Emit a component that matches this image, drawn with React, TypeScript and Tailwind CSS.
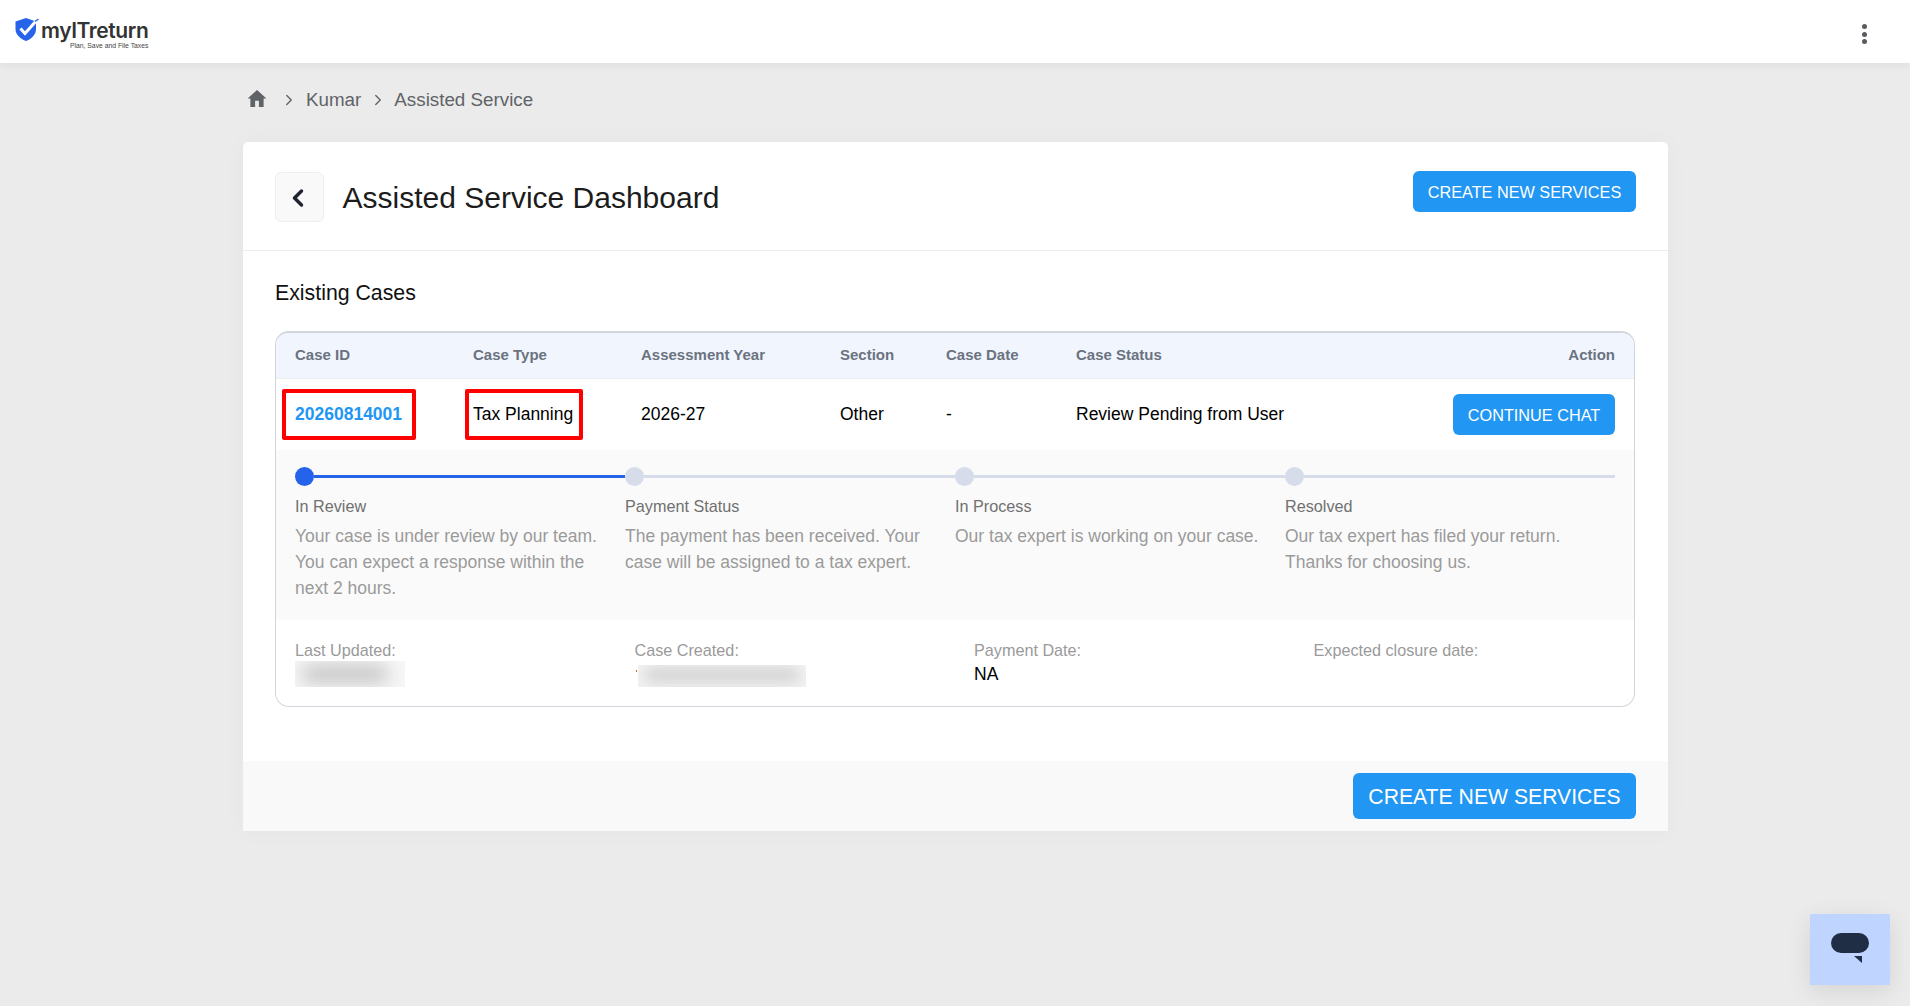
import { ChevronLeft, ChevronRight } from 'lucide-react';

const steps = [
  {
    title: 'In Review',
    text: 'Your case is under review by our team. You can expect a response within the next 2 hours.',
  },
  {
    title: 'Payment Status',
    text: 'The payment has been received. Your case will be assigned to a tax expert.',
  },
  {
    title: 'In Process',
    text: 'Our tax expert is working on your case.',
  },
  {
    title: 'Resolved',
    text: 'Our tax expert has filed your return. Thanks for choosing us.',
  },
];

const Logo = () => (
  <div className="flex items-start pt-[4px]">
    <svg width="24" height="23" viewBox="0 0 24 23">
      <path d="M11 0 L21 3.5 V11 C21 17 16 21 11 23 C6 21 0.5 17 0.5 11 V3.5 Z" fill="#2563eb" />
      <path d="M5.5 10.5 L10 15.5 L21.5 2.5" fill="none" stroke="#fff" strokeWidth="3" />
      <path d="M20 3.5 L23.5 1" fill="none" stroke="#2563eb" strokeWidth="1.5" />
    </svg>
    <div className="mt-[2px] ml-[2px] flex flex-col items-end">
      <span className="font-['Inter',sans-serif] text-[21px] leading-[22px] font-semibold tracking-[-0.4px] text-[#333]">
        myITreturn
      </span>
      <span className="font-['Liberation_Sans',sans-serif] text-[6.8px] leading-[8px] text-[#444]">
        Plan, Save and File Taxes
      </span>
    </div>
  </div>
);

const App = () => {
  return (
    <div className="relative min-h-[1006px] bg-[#ebebeb] font-['Liberation_Sans',sans-serif]">
      {/* Top bar */}
      <header className="flex h-[63px] items-center justify-between bg-white pr-[43px] pl-[15px] shadow-[0_2px_8px_rgba(0,0,0,0.06)]">
        <Logo />
        <div className="mt-[5px] flex flex-col gap-[2.5px]">
          <span className="h-[5px] w-[5px] rounded-full bg-[#5a5a60]"></span>
          <span className="h-[5px] w-[5px] rounded-full bg-[#5a5a60]"></span>
          <span className="h-[5px] w-[5px] rounded-full bg-[#5a5a60]"></span>
        </div>
      </header>

      {/* Breadcrumb */}
      <nav className="ml-[247px] flex h-[79px] items-center pb-[5px] text-[18.8px] text-[#5f6368]">
        <svg width="20" height="17" viewBox="0 0 20 18" className="mb-[3px]">
          <path d="M10 0 L20 9 H17 V18 H12 V11.5 H8 V18 H3 V9 H0 Z" fill="#5f6368" />
        </svg>
        <ChevronRight size={18} strokeWidth={1.8} className="ml-[12.5px]" />
        <span className="ml-[8.5px]">Kumar</span>
        <ChevronRight size={18} strokeWidth={1.8} className="ml-[7.5px]" />
        <span className="ml-[7.5px]">Assisted Service</span>
      </nav>

      {/* Card */}
      <main className="mr-[242px] ml-[243px] overflow-hidden rounded-t-[5px] bg-white shadow-[0_0_24px_rgba(0,0,0,0.03)]">
        <div className="flex h-[109px] items-start justify-between border-b border-[#ececf0] pt-[29px] pr-[32px] pl-[31.5px]">
          <div className="flex items-center">
            <button className="flex h-[50px] w-[49px] items-center justify-center rounded-[6px] border border-[#eeeeee] bg-[#f9f9f9] text-[#1f2430]">
              <ChevronLeft size={28} strokeWidth={3} className="mt-[2px] mr-[2px]" />
            </button>
            <h1 className="mt-[2px] ml-[19px] text-[30px] leading-[50px] text-[#1c1c1c]">Assisted Service Dashboard</h1>
          </div>
          <button className="h-[41px] w-[223px] rounded-[6px] bg-[#2196f3] pt-[1px] text-[16.25px] text-white">CREATE NEW SERVICES</button>
        </div>

        <div className="pt-[29px] pr-[33px] pb-[54px] pl-[32px]">
          <h2 className="text-[21.3px] leading-[26px] text-[#111]">Existing Cases</h2>

          <div className="mt-[25px] overflow-hidden rounded-[14px] border border-t-2 border-[#d3d5dc]">
            <div className="grid h-[46px] grid-cols-[178px_168px_199px_106px_130px_1fr_auto] items-center border-b border-[#eceef2] bg-[#f1f6fe] px-[19px] text-[15px] font-bold text-[#6b7280]">
              <span>Case ID</span>
              <span>Case Type</span>
              <span>Assessment Year</span>
              <span>Section</span>
              <span>Case Date</span>
              <span>Case Status</span>
              <span>Action</span>
            </div>

            <div className="grid h-[71px] grid-cols-[178px_168px_199px_106px_130px_1fr_auto] items-center px-[19px] text-[17.5px] text-black">
              <span className="relative font-bold text-[#2196f3]">
                20260814001
                <span className="absolute top-[-12px] left-[-13px] h-[51px] w-[134px] rounded-[2px] border-4 border-[#ff0000]"></span>
              </span>
              <span className="relative">
                Tax Planning
                <span className="absolute top-[-12px] left-[-8.5px] h-[51px] w-[118px] rounded-[2px] border-4 border-[#ff0000]"></span>
              </span>
              <span>2026-27</span>
              <span>Other</span>
              <span>-</span>
              <span>Review Pending from User</span>
              <button className="h-[41px] w-[162px] rounded-[6px] bg-[#2196f3] pt-[1px] text-[16.25px] text-white">CONTINUE CHAT</button>
            </div>

            {/* Progress */}
            <div className="grid h-[170px] grid-cols-4 bg-[#fafafa] px-[19px] pt-[17px]">
              {steps.map((step, i) => (
                <div key={step.title}>
                  <div className="flex items-center">
                    <span className={i === 0 ? 'h-[19px] w-[19px] shrink-0 rounded-full bg-[#2563eb]' : 'h-[19px] w-[19px] shrink-0 rounded-full bg-[#d6dcea]'}></span>
                    <span className={i === 0 ? 'h-[3px] flex-1 bg-[#2563eb]' : 'h-[3px] flex-1 bg-[#d6dcea]'}></span>
                  </div>
                  <p className="mt-[10px] text-[16.2px] leading-[21px] text-[#707070]">{step.title}</p>
                  <p className="mt-[6px] w-[310px] text-[17.5px] leading-[26px] text-[#9a9a9a]">{step.text}</p>
                </div>
              ))}
            </div>

            {/* Dates */}
            <div className="grid h-[86px] grid-cols-[339.5px_339.5px_339.5px_1fr] px-[19px] pt-[18px] text-[16.2px] leading-[24px] text-[#9a9a9a]">
              <div>
                <p>Last Updated:</p>
                <div className="mt-[-1px] h-[26px] w-[110px] overflow-hidden bg-[#f7f7f7]">
                  <div className="mx-[6px] mt-[4px] h-[18px] w-[88px] rounded-full bg-[#c4c4c4] blur-[9px]"></div>
                </div>
              </div>
              <div>
                <p>Case Created:</p>
                <div className="flex">
                  <span className="mt-[8px] ml-[1.5px] h-[2px] w-[1px] bg-[#c2702a]"></span>
                  <div className="mt-[3px] ml-[1px] h-[22px] w-[168px] overflow-hidden bg-[#f3f3f3]">
                    <div className="mx-[6px] mt-[2px] h-[16px] w-[156px] rounded-full bg-[#d4d4d4] blur-[7px]"></div>
                  </div>
                </div>
              </div>
              <div>
                <p>Payment Date:</p>
                <p className="text-[17.5px] text-black">NA</p>
              </div>
              <div>
                <p>Expected closure date:</p>
              </div>
            </div>
          </div>
        </div>

        <div className="flex h-[70px] items-start justify-end bg-[#f9f9f9] pt-[12px] pr-[32px]">
          <button className="h-[46px] w-[283px] rounded-[6px] bg-[#2196f3] pt-[1px] text-[21.2px] text-white">CREATE NEW SERVICES</button>
        </div>
      </main>

      {/* Chat launcher */}
      <button className="absolute top-[914px] left-[1810px] flex h-[71px] w-[80px] items-start justify-center bg-[#bfd4ff] pt-[19px] shadow-[0_6px_24px_rgba(0,0,0,0.1)]">
        <svg width="38" height="30" viewBox="0 0 38 30">
          <rect x="0" y="0" width="38" height="20" rx="10" fill="#1f2d45" />
          <path d="M23 23 H31 V30 Z" fill="#1f2d45" />
        </svg>
      </button>
    </div>
  );
};

export default App;
